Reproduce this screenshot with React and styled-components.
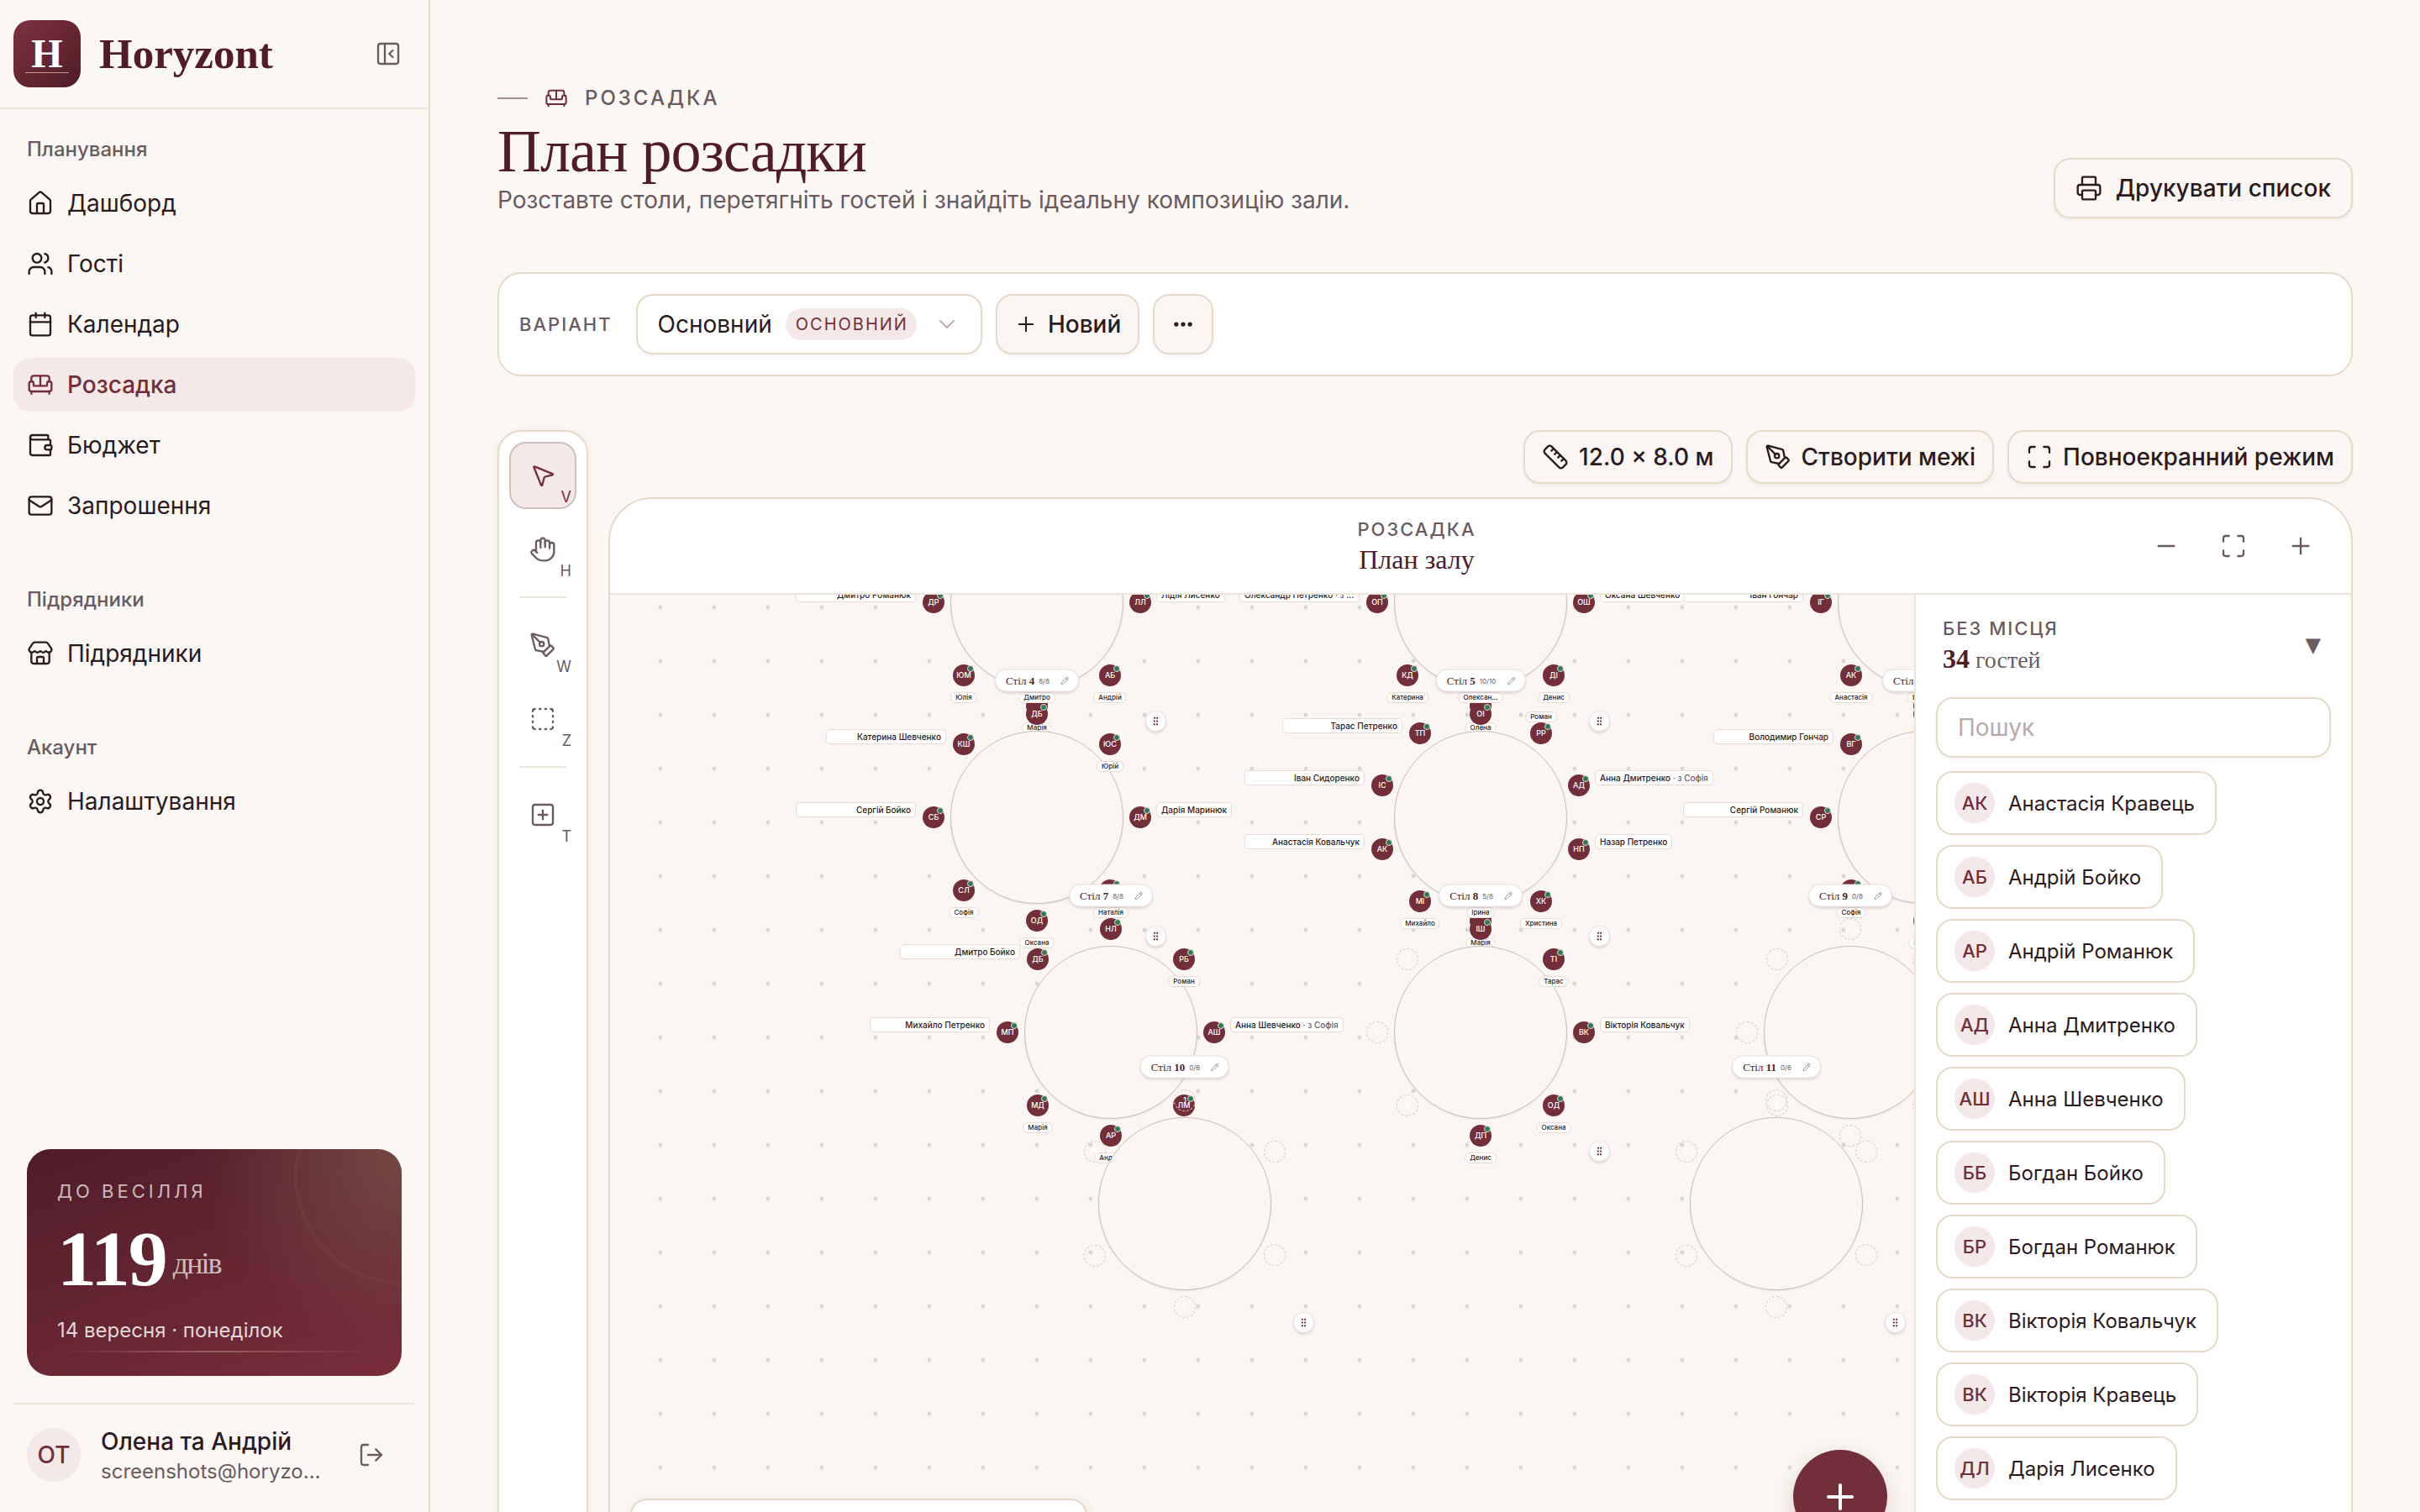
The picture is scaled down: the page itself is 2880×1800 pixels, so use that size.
import React from 'react';
import styled, { createGlobalStyle, css } from 'styled-components';
import {
  Calendar,
  ChevronDown,
  Ellipsis,
  GripVertical,
  Hand,
  House,
  LogOut,
  Mail,
  Maximize,
  Minus,
  MousePointer2,
  PanelLeftClose,
  Pencil,
  PenTool,
  Plus,
  Printer,
  Ruler,
  Settings,
  Sofa,
  SquareDashed,
  SquarePlus,
  Store,
  Users,
  Wallet,
} from 'lucide-react';

const c = {
  bg: '#fbf7f4',
  text: '#2b1a1d',
  muted: '#6b5b5f',
  wine: '#722f3a',
  wineDark: '#4f1c28',
  blush: '#f4e8e8',
  border: '#e6dac8',
  line: '#ece5da',
  faint: '#b8abab',
  green: '#2f7a55',
};

const sans = '"Inter", "Noto Sans", sans-serif';
const serif = '"Liberation Serif", serif';

const GlobalStyle = createGlobalStyle`
  *, *::before, *::after { box-sizing: border-box; }
  body {
    margin: 0;
    background: ${c.bg};
    color: ${c.text};
    font-family: ${sans};
    font-size: 28px;
  }
  button, input { font: inherit; color: inherit; }
  button { cursor: pointer; }
  svg { flex-shrink: 0; }
`;

const Shell = styled.div`
  display: flex;
  height: 100vh;
  overflow: hidden;
`;

/* ---------- sidebar ---------- */

const Sidebar = styled.aside`
  width: 512px;
  flex-shrink: 0;
  display: flex; flex-direction: column;
  border-right: 2px solid ${c.border};
`;

const Brand = styled.div`
  display: flex; align-items: center; gap: 22px;
  padding: 24px 32px 24px 16px;
  border-bottom: 2px solid ${c.line};
`;

const Logo = styled.span`
  display: flex; flex-direction: column; align-items: center; justify-content: center;
  width: 80px; height: 80px;
  border-radius: 20px;
  background: linear-gradient(135deg, #7d323e, ${c.wineDark});
  color: #fff;
  font: 700 48px/44px ${serif};
  &::after {
    content: '';
    width: 52px; height: 1px;
    background: #c39a86;
  }
`;

const BrandName = styled.span`
  flex: 1;
  color: ${c.wineDark};
  font: 700 51px/64px ${serif};
`;

const IconButton = styled.button`
  display: inline-flex; align-items: center; justify-content: center;
  width: ${p => p.$size || 72}px; height: ${p => p.$size || 72}px;
  padding: 0;
  border: 0; border-radius: 20px;
  background: none;
  color: ${c.muted};
`;

const Nav = styled.nav`
  flex: 1;
  display: flex; flex-direction: column; gap: 48px;
  padding: 16px;
`;

const NavLabel = styled.h2`
  margin: 0; padding: 0 16px;
  color: ${c.muted};
  font-size: 24px; font-weight: 500; line-height: 64px;
`;

const NavList = styled.ul`
  display: flex; flex-direction: column; gap: 8px;
  margin: 0; padding: 0;
  list-style: none;
`;

const NavLink = styled.a`
  display: flex; align-items: center; gap: 16px;
  height: 64px;
  padding: 0 16px;
  border-radius: 20px;
  color: inherit;
  text-decoration: none;
  ${p => p.$active && css`
    background: ${c.blush};
    color: ${c.wine};
    font-weight: 500;
  `}
`;

const Countdown = styled.section`
  position: relative;
  margin: 0 32px 32px;
  padding: 34px 36px;
  border-radius: 28px;
  overflow: hidden;
  background:
    radial-gradient(circle at 100% 0, rgba(122, 84, 72, .75), rgba(122, 66, 66, 0) 240px),
    linear-gradient(160deg, ${c.wineDark}, #782e3a);
  color: #fff;
`;

const Ring = styled.span`
  position: absolute; top: -98px; right: -132px;
  width: 260px; height: 260px;
  border: 4px solid rgba(160, 100, 80, .12);
  border-radius: 50%;
`;

const GoldLine = styled.span`
  position: absolute; right: 36px; bottom: 28px; left: 36px;
  height: 2px;
  background: linear-gradient(90deg, transparent, rgba(220, 180, 160, .4), transparent);
`;

const CountLabel = styled.p`
  margin: 0 0 16px;
  color: rgba(255, 255, 255, .7);
  font-size: 22px; line-height: 32px; letter-spacing: 4px;
  text-transform: uppercase;
`;

const CountValue = styled.p`
  display: flex; align-items: center; gap: 8px;
  margin: 0 0 18px;
  font: 700 94px/96px ${serif};
  letter-spacing: -2px;
  span {
    margin-top: 12px;
    color: rgba(255, 255, 255, .7);
    font-size: 36px; font-weight: 400; line-height: 40px;
  }
`;

const CountDate = styled.p`
  margin: 0;
  color: rgba(255, 255, 255, .82);
  font-size: 24px; line-height: 40px;
`;

const Account = styled.div`
  display: flex; align-items: center; gap: 24px;
  margin: 0 16px;
  padding: 22px 16px 30px;
  border-top: 2px solid ${c.line};
`;

const Avatar = styled.span`
  display: inline-flex; align-items: center; justify-content: center;
  flex-shrink: 0;
  width: ${p => p.$size}px; height: ${p => p.$size}px;
  border-radius: 50%;
  background: ${c.blush};
  color: ${c.wine};
  font-size: ${p => (p.$size > 50 ? 28 : 22)}px; font-weight: 500;
`;

const AccountText = styled.div`
  width: 266px;
  padding-top: 4px;
  strong, span {
    display: block;
    overflow: hidden;
    text-overflow: ellipsis; white-space: nowrap;
  }
  strong { font-size: 28px; font-weight: 500; line-height: 36px; }
  span { color: ${c.muted}; font-size: 24px; line-height: 36px; }
`;

/* ---------- page ---------- */

const Main = styled.main`
  flex: 1;
  min-width: 0;
  display: flex; flex-direction: column; gap: 64px;
  padding: 100px 80px 80px;
  overflow-y: auto;
  scrollbar-width: none;
`;

const PageHeader = styled.header`
  display: flex; align-items: flex-end; justify-content: space-between;
`;

const Eyebrow = styled.p`
  display: flex; align-items: center; gap: 20px;
  margin: 0 0 8px;
  color: ${c.muted};
  font-size: 24px; font-weight: 500; line-height: 34px; letter-spacing: 3px;
  text-transform: uppercase;
  &::before {
    content: '';
    width: 36px; height: 2px;
    background: #a8918f;
  }
  svg { color: ${c.wine}; }
`;

const Title = styled.h1`
  margin: 0;
  color: ${c.wineDark};
  font: 400 72px/76px ${serif};
  letter-spacing: -1px;
`;

const Subtitle = styled.p`
  margin: 0 0 2px;
  color: ${c.muted};
  font-size: 28px; line-height: 40px;
`;

const Button = styled.button`
  display: inline-flex; align-items: center; justify-content: center; gap: ${p => p.$gap || 12}px;
  height: ${p => p.$height || 72}px;
  padding: 0 ${p => p.$pad || 24}px;
  border: 2px solid ${c.border};
  border-radius: 20px;
  background: ${p => (p.$white ? '#fff' : '#fbf6f3')};
  box-shadow: 0 2px 4px rgba(80, 28, 40, .06);
  font-weight: ${p => (p.$white ? 400 : 500)};
  white-space: nowrap;
`;

const VariantBar = styled.section`
  display: flex; align-items: center; gap: 16px;
  padding: 24px;
  border: 2px solid ${c.border};
  border-radius: 28px;
  background: #fff;
`;

const SmallCaps = styled.span`
  display: block;
  color: ${c.muted};
  font-size: 22px; font-weight: 500; line-height: 32px; letter-spacing: 2px;
  text-transform: uppercase;
`;

const VariantLabel = styled(SmallCaps)`
  margin-right: 12px;
`;

const Badge = styled.span`
  margin: 0 8px 0 4px; padding: 0 10px 0 12px;
  border-radius: 20px;
  background: ${c.blush};
  color: ${c.wine};
  font-size: 20px; line-height: 38px; letter-spacing: 2px;
  text-transform: uppercase;
`;

const Workspace = styled.section`
  display: flex; gap: 24px;
`;

const Tools = styled.div`
  flex-shrink: 0;
  display: flex; flex-direction: column; align-items: center; gap: 8px;
  padding: 12px;
  border: 2px solid ${c.border};
  border-radius: 28px;
  background: #fff;
  box-shadow: 0 2px 8px rgba(80, 28, 40, .08);
`;

const Tool = styled.button`
  position: relative;
  display: flex; align-items: center; justify-content: center;
  width: 80px; height: 80px;
  padding: 0;
  border: 2px solid ${p => (p.$active ? '#cfc0bd' : 'transparent')};
  border-radius: 20px;
  background: ${p => (p.$active ? c.blush : 'none')};
  color: ${p => (p.$active ? c.wine : c.muted)};
  kbd {
    position: absolute; right: 4px; bottom: 2px;
    font: 400 18px/20px ${sans};
  }
`;

const ToolDivider = styled.hr`
  width: 56px; height: 2px;
  margin: 8px 0;
  border: 0;
  background: ${c.line};
`;

const Stage = styled.div`
  flex: 1;
  min-width: 0;
  display: flex; flex-direction: column; gap: 16px;
`;

const StageActions = styled.div`
  display: flex; justify-content: flex-end; gap: 16px;
`;

const Planner = styled.div`
  border: 2px solid ${c.border};
  border-radius: 52px;
  overflow: hidden;
  background: #fff;
`;

const PlannerHeader = styled.div`
  display: flex; align-items: center; justify-content: space-between;
  padding: 20px 24px;
  border-bottom: 2px solid ${c.line};
  &::before {
    content: '';
    width: 80px;
  }
`;

const PlannerTitle = styled.div`
  text-align: center;
  h2 {
    margin: 0;
    color: ${c.wineDark};
    font: 400 32px/40px ${serif};
  }
`;

const ZoomGroup = styled.div`
  display: flex; gap: 8px;
`;

const PlannerBody = styled.div`
  display: flex;
  min-height: 1162px;
`;

const Canvas = styled.div`
  position: relative;
  flex: 1;
  min-width: 0;
  overflow: hidden;
  background: #fbf6f3 radial-gradient(circle, #dad5d3 2px, transparent 3px) 28px -17px / 64px 64px;
`;

/* ---------- seating map ---------- */

const TableRoot = styled.div`
  position: absolute;
  z-index: 0;
  width: 0; height: 0;
`;

const TableTop = styled.div`
  position: absolute; top: -103px; left: -103px;
  width: 206px; height: 206px;
  border: 1px solid #cbbfb4;
  border-radius: 50%;
  background: #fbf6f3;
  box-shadow: 0 1px 2px rgba(80, 28, 40, .1);
`;

const Seat = styled.div`
  position: absolute;
  display: flex; align-items: center; justify-content: center;
  width: 26px; height: 26px;
  margin: -13px 0 0 -13px;
  border-radius: 50%;
  color: #fff;
  font-size: 9px; font-weight: 500; line-height: 12px;
  ${p => (p.$empty ? css`
    border: 1px dashed #d3c9c2;
  ` : css`
    background: ${c.wine};
    &::after {
      content: '';
      position: absolute; top: 1px; right: 1px;
      width: 8px; height: 8px;
      border: 1px solid #e9dcd8; border-radius: 50%;
      background: ${c.green};
    }
  `)}
`;

const nameTag = css`
  left: 13px;
  transform: translateX(-50%);
  padding: 0 5px;
  border-radius: 6px;
  font-size: 8px; line-height: 11px;
`;

const sideTag = css`
  top: -5px;
  padding: 0 5px;
  border-radius: 5px;
  font-size: 10px; line-height: 16px;
`;

const labelSpots = {
  above: css`${nameTag} bottom: 26px;`,
  below: css`${nameTag} top: 33px;`,
  left: css`${sideTag} right: 34px; width: 143px; text-align: right;`,
  right: css`${sideTag} left: 32px;`,
};

const SeatLabel = styled.span`
  position: absolute;
  z-index: 1;
  overflow: hidden;
  border: 1px solid #e8dcd3;
  background: #fff;
  color: ${c.text};
  text-overflow: ellipsis; white-space: nowrap;
  ${p => labelSpots[p.$spot]}
  small { color: ${c.muted}; font-size: inherit; }
`;

const TablePill = styled.div`
  position: absolute; top: -163px; left: 0;
  z-index: 1;
  transform: translate(-50%, -50%);
  display: flex; align-items: center; gap: 5px;
  height: 27px;
  padding: 0 11px 0 12px;
  border: 1px solid #ebe0d9;
  border-radius: 14px;
  background: #fff;
  box-shadow: 0 2px 3px rgba(80, 28, 40, .14);
  color: ${c.wineDark};
  font: 400 13px/16px ${serif};
  white-space: nowrap;
  b { font-weight: 700; }
  small { color: ${c.muted}; font: 400 8px/12px ${sans}; }
  svg { margin-left: 8px; color: ${c.muted}; }
`;

const Handle = styled.button`
  position: absolute; top: 129px; left: 129px;
  display: flex; align-items: center; justify-content: center;
  width: 25px; height: 25px;
  padding: 0;
  border: 1px solid #ebe0d9; border-radius: 50%;
  background: #fff;
  box-shadow: 0 2px 3px rgba(80, 28, 40, .14);
  color: ${c.wineDark};
`;

const Legend = styled.div`
  position: absolute; bottom: 24px; left: 24px;
  width: 544px; height: 62px;
  border: 2px solid ${c.border};
  border-radius: 20px;
  background: #fff;
  box-shadow: 0 2px 12px rgba(80, 28, 40, .08);
`;

const AddButton = styled.button`
  position: absolute; right: 32px; bottom: 32px;
  display: flex; align-items: center; justify-content: center;
  width: 112px; height: 112px;
  padding: 0;
  border: 0; border-radius: 50%;
  background: ${c.wine};
  box-shadow: 0 8px 24px rgba(80, 28, 40, .16);
  color: #fff;
`;

/* ---------- guests panel ---------- */

const GuestPanel = styled.aside`
  flex-shrink: 0;
  width: 520px;
  padding: 24px;
  border-left: 2px solid ${c.line};
`;

const GuestHeader = styled.div`
  display: flex; align-items: center; justify-content: space-between;
  padding: 0 0 0 8px;
`;

const GuestTotal = styled.span`
  display: block;
  color: ${c.muted};
  font: 400 28px/44px ${serif};
  b { color: ${c.wineDark}; font-size: 32px; font-weight: 700; line-height: 32px; }
`;

const Triangle = styled.button`
  padding: 0 12px 4px;
  border: 0;
  background: none;
  color: ${c.muted};
  font: 400 24px/32px "DejaVu Sans", sans-serif;
`;

const SearchInput = styled.input`
  display: block;
  width: 100%; height: 72px;
  margin: 22px 0 16px; padding: 0 24px;
  border: 2px solid ${c.border};
  border-radius: 20px;
  background: #fff;
  box-shadow: 0 2px 4px rgba(80, 28, 40, .05);
  font-size: 28px;
  &::placeholder { color: ${c.faint}; opacity: 1; }
`;

const GuestList = styled.ul`
  display: flex; flex-direction: column; align-items: flex-start; gap: 12px;
  margin: 0; padding: 0;
  list-style: none;
`;

const GuestChip = styled.li`
  display: flex; align-items: center; gap: 16px;
  padding: 12px 24px 12px 20px;
  border: 2px solid ${c.border};
  border-radius: 20px;
  background: #fff;
  font-size: 24px;
`;

const navGroups = [
  {
    title: 'Планування',
    items: [
      { icon: House, label: 'Дашборд' },
      { icon: Users, label: 'Гості' },
      { icon: Calendar, label: 'Календар' },
      { icon: Sofa, label: 'Розсадка', active: true },
      { icon: Wallet, label: 'Бюджет' },
      { icon: Mail, label: 'Запрошення' },
    ],
  },
  { title: 'Підрядники', items: [{ icon: Store, label: 'Підрядники' }] },
  { title: 'Акаунт', items: [{ icon: Settings, label: 'Налаштування' }] },
];

const toolGroups = [
  [
    { icon: MousePointer2, hotkey: 'V', name: 'Вибір', active: true },
    { icon: Hand, hotkey: 'H', name: 'Рука' },
  ],
  [
    { icon: PenTool, hotkey: 'W', name: 'Стіни' },
    { icon: SquareDashed, hotkey: 'Z', name: 'Зона' },
  ],
  [{ icon: SquarePlus, hotkey: 'T', name: 'Стіл' }],
];

const guests = [
  ['АК', 'Анастасія Кравець'],
  ['АБ', 'Андрій Бойко'],
  ['АР', 'Андрій Романюк'],
  ['АД', 'Анна Дмитренко'],
  ['АШ', 'Анна Шевченко'],
  ['ББ', 'Богдан Бойко'],
  ['БР', 'Богдан Романюк'],
  ['ВК', 'Вікторія Ковальчук'],
  ['ВК', 'Вікторія Кравець'],
  ['ДЛ', 'Дарія Лисенко'],
];

// Seats run clockwise from the top: [initials, label, label side, companion]; null is a free seat.
const tables = [
  {
    id: 1, x: 508, y: 9, count: '8/8',
    seats: [[], [], ['ЛЛ', 'Лідія Лисенко', 'right'], ['АБ', 'Андрій', 'below'], ['', 'Марія', 'below'],
      ['ЮМ', 'Юлія', 'below'], ['ДР', 'Дмитро Романюк', 'left'], []],
  },
  {
    id: 2, x: 1036, y: 9, count: '8/8',
    seats: [[], [], ['ОШ', 'Оксана Шевченко', 'right'], ['ДІ', 'Денис', 'below'], ['', 'Олена', 'below'],
      ['КД', 'Катерина', 'below'], ['ОП', 'Олександр Петренко', 'left', 'Софія'], []],
  },
  {
    id: 3, x: 1564, y: 9, count: '8/8',
    seats: [[], [], [], [], ['', 'Іван', 'below'], ['АК', 'Анастасія', 'below'], ['ІГ', 'Іван Гончар', 'left'], []],
  },
  {
    id: 4, x: 508, y: 265, count: '8/8',
    seats: [['ДБ', 'Дмитро', 'above'], ['ЮС', 'Юрій', 'below'], ['ДМ', 'Дарія Маринюк', 'right'], [],
      ['ОД', 'Оксана', 'below'], ['СЛ', 'Софія', 'below'], ['СБ', 'Сергій Бойко', 'left'], ['КШ', 'Катерина Шевченко', 'left']],
  },
  {
    id: 5, x: 1036, y: 265, count: '10/10',
    seats: [['ОІ', 'Олексан…', 'above'], ['РР', 'Роман', 'above'], ['АД', 'Анна Дмитренко', 'right', 'Софія'],
      ['НП', 'Назар Петренко', 'right'], ['ХК', 'Христина', 'below'], ['', 'Марія', 'below'], ['МІ', 'Михайло', 'below'],
      ['АК', 'Анастасія Ковальчук', 'left'], ['ІС', 'Іван Сидоренко', 'left'], ['ТП', 'Тарас Петренко', 'left']],
  },
  {
    id: 6, x: 1564, y: 265, count: '8/8',
    seats: [['', 'Богдан', 'above'], [], [], [], ['', 'Роман', 'below'], ['', 'Софія', 'below'],
      ['СР', 'Сергій Романюк', 'left'], ['ВГ', 'Володимир Гончар', 'left']],
  },
  {
    id: 7, x: 596, y: 521, count: '8/8',
    seats: [['НЛ', 'Наталія', 'above'], ['РБ', 'Роман', 'below'], ['АШ', 'Анна Шевченко', 'right', 'Софія'], ['ЛМ'],
      ['АР', 'Андрій', 'below'], ['МД', 'Марія', 'below'], ['МП', 'Михайло Петренко', 'left'], ['ДБ', 'Дмитро Бойко', 'left']],
  },
  {
    id: 8, x: 1036, y: 521, count: '5/8',
    seats: [['ІШ', 'Ірина', 'above'], ['ТІ', 'Тарас', 'below'], ['ВК', 'Вікторія Ковальчук', 'right'],
      ['ОД', 'Оксана', 'below'], ['ДП', 'Денис', 'below'], null, null, null],
  },
  { id: 9, x: 1476, y: 521, count: '0/8', seats: Array(8).fill(null) },
  { id: 10, x: 684, y: 725, count: '0/6', seats: Array(6).fill(null) },
  { id: 11, x: 1388, y: 725, count: '0/6', seats: Array(6).fill(null) },
];

const SEAT_RADIUS = 123;

const seatPosition = (index, total) => {
  const angle = (index / total) * Math.PI * 2;
  return {
    left: Math.round(Math.sin(angle) * SEAT_RADIUS),
    top: Math.round(-Math.cos(angle) * SEAT_RADIUS),
  };
};

const RoundTable = ({ id, x, y, count, seats }) => (
  <TableRoot style={{ left: x, top: y }}>
    <TableTop />
    {seats.map((seat, i) => {
      const [initials, label, spot, companion] = seat || [];
      return (
        <Seat key={i} $empty={!seat} style={seatPosition(i, seats.length)}>
          {seat ? initials : i + 1}
          {label && (
            <SeatLabel $spot={spot}>
              {label}
              {companion && <small> · з {companion}</small>}
            </SeatLabel>
          )}
        </Seat>
      );
    })}
    <TablePill>
      <span>Стіл <b>{id}</b></span>
      <small>{count}</small>
      <Pencil size={10} strokeWidth={1.5} />
    </TablePill>
    <Handle aria-label={`Перемістити стіл ${id}`}><GripVertical size={13} strokeWidth={2} /></Handle>
  </TableRoot>
);

const Icon = ({ as: Glyph, size = 32 }) => <Glyph size={size} strokeWidth={1.75} aria-hidden="true" />;

const AppSidebar = () => (
  <Sidebar>
    <Brand>
      <Logo>H</Logo>
      <BrandName>Horyzont</BrandName>
      <IconButton $size={32} aria-label="Згорнути меню"><Icon as={PanelLeftClose} /></IconButton>
    </Brand>

    <Nav>
      {navGroups.map(group => (
        <div key={group.title}>
          <NavLabel>{group.title}</NavLabel>
          <NavList>
            {group.items.map(item => (
              <li key={item.label}>
                <NavLink href="#" $active={item.active}>
                  <Icon as={item.icon} />
                  {item.label}
                </NavLink>
              </li>
            ))}
          </NavList>
        </div>
      ))}
    </Nav>

    <Countdown>
      <Ring />
      <CountLabel>До весілля</CountLabel>
      <CountValue>119 <span>днів</span></CountValue>
      <CountDate>14 вересня · понеділок</CountDate>
      <GoldLine />
    </Countdown>

    <Account>
      <Avatar $size={64}>ОТ</Avatar>
      <AccountText>
        <strong>Олена та Андрій</strong>
        <span>screenshots@horyzont.app</span>
      </AccountText>
      <IconButton $size={64} aria-label="Вийти"><Icon as={LogOut} /></IconButton>
    </Account>
  </Sidebar>
);

const App = () => (
  <>
    <GlobalStyle />
    <Shell>
      <AppSidebar />
      <Main>
        <PageHeader>
          <div>
            <Eyebrow><Icon as={Sofa} size={28} />Розсадка</Eyebrow>
            <Title>План розсадки</Title>
            <Subtitle>Розставте столи, перетягніть гостей і знайдіть ідеальну композицію зали.</Subtitle>
          </div>
          <Button $gap={16}><Icon as={Printer} />Друкувати список</Button>
        </PageHeader>

        <VariantBar>
          <VariantLabel id="variant-label">Варіант</VariantLabel>
          <Button $white role="combobox" aria-expanded="false" aria-labelledby="variant-label">
            Основний
            <Badge>Основний</Badge>
            <ChevronDown size={32} strokeWidth={1.5} color={c.faint} />
          </Button>
          <Button $pad={20}><Icon as={Plus} size={28} />Новий</Button>
          <Button $pad={20} aria-label="Більше дій"><Ellipsis size={28} strokeWidth={2.5} /></Button>
        </VariantBar>

        <Workspace>
          <Tools>
            {toolGroups.map((group, i) => (
              <React.Fragment key={i}>
                {i > 0 && <ToolDivider />}
                {group.map(tool => (
                  <Tool key={tool.hotkey} $active={tool.active} aria-label={tool.name}>
                    <Icon as={tool.icon} />
                    <kbd>{tool.hotkey}</kbd>
                  </Tool>
                ))}
              </React.Fragment>
            ))}
          </Tools>

          <Stage>
            <StageActions>
              <Button $height={64} $pad={20}><Icon as={Ruler} />12.0 × 8.0 м</Button>
              <Button $height={64} $pad={20}><Icon as={PenTool} />Створити межі</Button>
              <Button $height={64} $pad={20}><Icon as={Maximize} />Повноекранний режим</Button>
            </StageActions>

            <Planner>
              <PlannerHeader>
                <PlannerTitle>
                  <SmallCaps>Розсадка</SmallCaps>
                  <h2>План залу</h2>
                </PlannerTitle>
                <ZoomGroup>
                  <IconButton aria-label="Зменшити"><Icon as={Minus} /></IconButton>
                  <IconButton aria-label="Вмістити"><Icon as={Maximize} /></IconButton>
                  <IconButton aria-label="Збільшити"><Icon as={Plus} /></IconButton>
                </ZoomGroup>
              </PlannerHeader>

              <PlannerBody>
                <Canvas>
                  {tables.map(table => <RoundTable key={table.id} {...table} />)}
                  <Legend />
                  <AddButton aria-label="Додати стіл"><Plus size={48} strokeWidth={2} /></AddButton>
                </Canvas>

                <GuestPanel>
                  <GuestHeader>
                    <div>
                      <SmallCaps>Без місця</SmallCaps>
                      <GuestTotal><b>34</b> гостей</GuestTotal>
                    </div>
                    <Triangle aria-label="Згорнути список">▼</Triangle>
                  </GuestHeader>
                  <SearchInput type="search" placeholder="Пошук" aria-label="Пошук" />
                  <GuestList>
                    {guests.map(([initials, name]) => (
                      <GuestChip key={name}><Avatar $size={48}>{initials}</Avatar>{name}</GuestChip>
                    ))}
                  </GuestList>
                </GuestPanel>
              </PlannerBody>
            </Planner>
          </Stage>
        </Workspace>
      </Main>
    </Shell>
  </>
);

export default App;
